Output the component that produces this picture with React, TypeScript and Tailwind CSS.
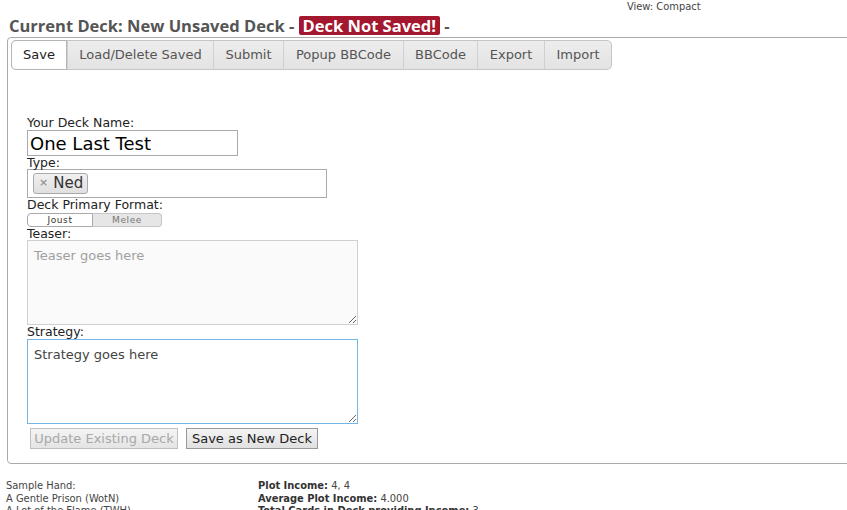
import React from "react";

const tabs: [string, string][] = [
  ["Save", "w-[56px]"],
  ["Load/Delete Saved", "w-[146px]"],
  ["Submit", "w-[70px]"],
  ["Popup BBCode", "w-[120px]"],
  ["BBCode", "w-[74px]"],
  ["Export", "w-[67px]"],
  ["Import", "w-[67px]"],
];

function Tabs() {
  return (
    <div className="flex h-[30px] w-fit rounded-[5px] border border-[#c5c5c5] bg-[linear-gradient(#ededed,#e3e3e3)] text-[13px]">
      {tabs.map(([t, w], i) => (
        <div
          key={t}
          className={
            i === 0
              ? `-my-px -ml-px flex h-[30px] items-center justify-center whitespace-nowrap rounded-l-[5px] border border-[#b5b5b5] bg-white text-[#222] ${w}`
              : `flex items-center justify-center whitespace-nowrap border-l border-[#d0d0d0] text-[#555] ${w}`
          }
        >
          {t}
        </div>
      ))}
    </div>
  );
}

export default function App() {
  return (
    <div className="h-[510px] w-[847px] overflow-hidden bg-white font-['DejaVu_Sans',sans-serif] text-[12.5px] text-[#222]">
      <div className="h-[14px] pl-[627px] pt-[1px] font-['DejaVu_Sans_Condensed','DejaVu_Sans',sans-serif] text-[11px] leading-[12px] text-[#444]">
        View: Compact
      </div>
      <div className="flex h-[23px] items-center pl-[9px] font-['Open_Sans',sans-serif] text-[16.5px] font-bold leading-[20px] text-[#555]">
        <span>Current Deck: New Unsaved Deck -&nbsp;</span>
        <span className="rounded-[2px] bg-[#a3172f] px-[4px] leading-[19px] text-white">Deck Not Saved!</span>
        <span>&nbsp;-</span>
      </div>
      <div className="ml-[7px] h-[427px] w-[860px] rounded-[4px] border border-[#aaa] pl-[3px] pt-[2px]">
        <Tabs />
        <div className="pl-[16px] pt-[46px]">
          <div className="h-[14px] leading-[14px]">Your Deck Name:</div>
          <div className="flex h-[26px] w-[211px] items-center border border-[#aaa] pl-[2px] text-[18px] text-black">
            One Last Test
          </div>
          <div className="h-[13px] leading-[13px]">Type:</div>
          <div className="flex h-[29px] w-[300px] items-center border border-[#aaa] pl-[5px]">
            <div className="flex h-[21px] items-center gap-[5px] rounded-[3px] border border-[#aaa] bg-[linear-gradient(#f0f0f0,#e0e0e0)] pl-[5px] pr-[4px] text-[15px] text-[#333]">
              <span className="text-[11px] font-bold text-[#999]">×</span>
              <span>Ned</span>
            </div>
          </div>
          <div className="h-[14px] leading-[14px]">Deck Primary Format:</div>
          <div className="mt-[1px] flex h-[14px] w-[135px] text-[9px] leading-[12px] tracking-[0.6px]">
            <div className="flex w-[66px] justify-center rounded-l-[4px] border border-[#aaa] bg-white text-[#333]">Joust</div>
            <div className="flex flex-1 justify-center rounded-r-[4px] border border-l-0 border-[#c5c5c5] bg-[#e6e6e6] text-[#777]">Melee</div>
          </div>
          <div className="h-[13px] leading-[13px]">Teaser:</div>
          <textarea
            readOnly
            placeholder="Teaser goes here"
            className="block h-[85px] w-[331px] border border-[#d0d0d0] bg-[#fafafa] px-[6px] py-[5px] text-[13px] outline-none placeholder:text-[#a0a0a0]"
          />
          <div className="h-[14px] leading-[14px]">Strategy:</div>
          <textarea
            readOnly
            defaultValue="Strategy goes here"
            className="block h-[85px] w-[331px] border border-[#74b6e6] bg-white px-[6px] py-[5px] text-[13px] text-[#444] outline-none"
          />
          <div className="mt-[4px] flex gap-[8px] pl-[3px]">
            <button className="h-[21px] w-[148px] border border-[#c0c0c0] bg-[linear-gradient(#f4f4f4,#e4e4e4)] text-[13px] text-[#a8a8a8]">
              Update Existing Deck
            </button>
            <button className="h-[21px] w-[132px] border border-[#999] bg-[linear-gradient(#f4f4f4,#e0e0e0)] text-[13px] text-[#222]">
              Save as New Deck
            </button>
          </div>
        </div>
      </div>
      <div className="flex pl-[6px] pt-[16px] font-['DejaVu_Sans_Condensed','DejaVu_Sans',sans-serif] text-[11px] leading-[12.5px] text-[#444]">
        <div className="w-[252px]">
          <div>Sample Hand:</div>
          <div>A Gentle Prison (WotN)</div>
          <div>A Lot of the Flame (TWH)</div>
        </div>
        <div>
          <div>
            <b className="text-[#333]">Plot Income:</b> 4, 4
          </div>
          <div>
            <b className="text-[#333]">Average Plot Income:</b> 4.000
          </div>
          <div>
            <b className="text-[#333]">Total Cards in Deck providing Income:</b> 3
          </div>
        </div>
      </div>
    </div>
  );
}
